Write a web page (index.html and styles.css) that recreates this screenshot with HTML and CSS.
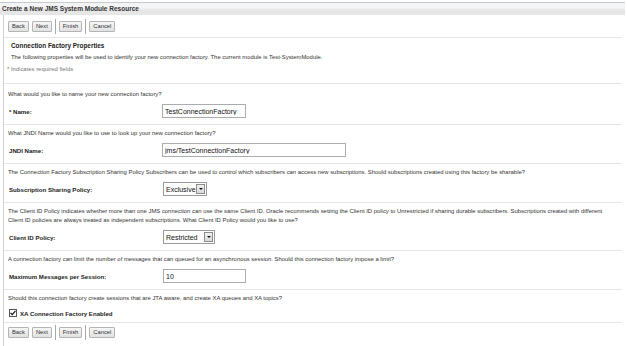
FILE: index.html
```html
<!DOCTYPE html>
<html lang="en">
<head>
  <meta charset="UTF-8">
  <meta name="viewport" content="width=device-width, initial-scale=1.0">
  <title>Create a New JMS System Module Resource</title>
  <link rel="stylesheet" href="styles.css">
</head>
<body>
  <div class="title-bar">Create a New JMS System Module Resource</div>

  <div class="panel">
    <div class="toolbar">
      <button type="button" class="btn">Back</button>
      <button type="button" class="btn">Next</button>
      <span class="sep"></span>
      <button type="button" class="btn">Finish</button>
      <span class="sep"></span>
      <button type="button" class="btn">Cancel</button>
    </div>

    <div class="section intro">
      <h2>Connection Factory Properties</h2>
      <p class="desc">The following properties will be used to identify your new connection factory. The current module is Test-SystemModule.</p>
      <p class="required">* Indicates required fields</p>
    </div>

    <div class="section section-name">
      <p class="question">What would you like to name your new connection factory?</p>
      <div class="row">
        <label class="label" for="name">* Name:</label>
        <input type="text" id="name" class="text-input" value="TestConnectionFactory">
      </div>
    </div>

    <div class="section">
      <p class="question">What JNDI Name would you like to use to look up your new connection factory?</p>
      <div class="row">
        <label class="label" for="jndi">JNDI Name:</label>
        <input type="text" id="jndi" class="text-input wide" value="jms/TestConnectionFactory">
      </div>
    </div>

    <div class="section">
      <p class="question">The Connection Factory Subscription Sharing Policy Subscribers can be used to control which subscribers can access new subscriptions. Should subscriptions created using this factory be sharable?</p>
      <div class="row">
        <span class="label">Subscription Sharing Policy:</span>
        <span class="select">
          <span class="select-value">Exclusive</span>
          <span class="select-arrow"></span>
        </span>
      </div>
    </div>

    <div class="section">
      <p class="question">The Client ID Policy indicates whether more than one JMS connection can use the same Client ID. Oracle recommends setting the Client ID policy to Unrestricted if sharing durable subscribers. Subscriptions created with different<br>Client ID policies are always treated as independent subscriptions. What Client ID Policy would you like to use?</p>
      <div class="row">
        <span class="label">Client ID Policy:</span>
        <span class="select">
          <span class="select-value select-value-wide">Restricted</span>
          <span class="select-arrow"></span>
        </span>
      </div>
    </div>

    <div class="section">
      <p class="question">A connection factory can limit the number of messages that can queued for an asynchronous session. Should this connection factory impose a limit?</p>
      <div class="row">
        <label class="label" for="max">Maximum Messages per Session:</label>
        <input type="text" id="max" class="text-input short" value="10">
      </div>
    </div>

    <div class="section section-xa">
      <p class="question">Should this connection factory create sessions that are JTA aware, and create XA queues and XA topics?</p>
      <div class="row row-check">
        <span class="checkbox">
          <svg width="6" height="6" viewBox="0 0 6 6"><path d="M0.5 2.8 L2.2 4.6 L5.5 0.8" fill="none" stroke="#111" stroke-width="1.2"/></svg>
        </span>
        <span class="check-label">XA Connection Factory Enabled</span>
      </div>
    </div>

    <div class="toolbar toolbar-bottom">
      <button type="button" class="btn">Back</button>
      <button type="button" class="btn">Next</button>
      <span class="sep"></span>
      <button type="button" class="btn">Finish</button>
      <span class="sep"></span>
      <button type="button" class="btn">Cancel</button>
    </div>
  </div>
</body>
</html>
```

FILE: styles.css
```css
* {
  box-sizing: border-box;
  margin: 0;
  padding: 0;
}

body {
  font-family: 'Liberation Sans', Arial, sans-serif;
  font-size: 5.9px;
  color: #333;
  background-color: #fff;
  padding-top: 2px;
}

/* タイトルバー */
.title-bar {
  width: 625px;
  height: 13px;
  border-top: 1px solid #c3cbd3;
  background: linear-gradient(#f4f4f4 0, #f4f4f4 40%, #e6e6e6 60%, #e6e6e6 100%);
  font-size: 6.5px;
  font-weight: bold;
  line-height: 12px;
  color: #333;
  padding-left: 2px;
}

.panel {
  width: 619px;
  margin-left: 3px;
  border-left: 1px solid #d0d0d0;
  min-height: 331px;
}

/* ボタン */
.toolbar {
  display: flex;
  align-items: center;
  gap: 3px;
  height: 22px;
  padding: 0 0 0 4px;
}

.toolbar-bottom {
  border-top: 1px solid #e5e5e5;
  height: auto;
  padding: 4px 0 0 4px;
}

.btn {
  height: 11px;
  padding: 0 3px;
  font-family: inherit;
  font-size: 5.8px;
  color: #333;
  background: linear-gradient(#f6f6f6, #e2e2e2);
  border: 1px solid #b4b4b4;
  border-radius: 1px;
  line-height: 9px;
}

.sep {
  width: 1px;
  height: 15px;
  margin: -2px 0;
  background-color: #a8a8a8;
}

/* セクション */
.section {
  border-top: 1px solid #e5e5e5;
  padding: 4px 0 6px 4px;
}

.intro {
  padding: 3px 0 9px 7px;
}

h2 {
  font-size: 6.4px;
  font-weight: bold;
  line-height: 9px;
  color: #222;
}

.desc {
  margin-top: 3px;
  line-height: 9px;
}

.required {
  margin-top: 3px;
  margin-left: -4px;
  line-height: 9px;
  color: #777;
}

.section-name {
  padding-top: 6px;
  padding-bottom: 6px;
}

.question {
  line-height: 9px;
}

.row {
  display: flex;
  align-items: center;
  height: 14px;
  margin-top: 5px;
}

.label {
  width: 154px;
  padding-left: 1px;
  font-size: 6.1px;
  font-weight: bold;
  color: #222;
}

.text-input {
  width: 84px;
  height: 14px;
  border: 1px solid #a9adb2;
  padding: 0 2px;
  font-family: inherit;
  font-size: 7px;
  color: #111;
}

.text-input.wide {
  width: 184px;
}

.text-input.short {
  width: 83px;
  margin-left: 1px;
}

/* セレクト */
.select {
  display: flex;
  align-items: center;
  height: 14px;
  margin-left: 1px;
  border: 1px solid #9a9a9a;
  padding: 0 1px 0 2px;
  font-size: 7px;
  color: #111;
}

.select-value {
  width: 30px;
}

.select-value-wide {
  width: 38px;
}

.select-arrow {
  position: relative;
  width: 9px;
  height: 10px;
  border: 1px solid #8c8c8c;
  background: linear-gradient(#f2f2f2, #d8d8d8);
}

.select-arrow::after {
  content: '';
  position: absolute;
  left: 2px;
  top: 3px;
  border-left: 2px solid transparent;
  border-right: 2px solid transparent;
  border-top: 2px solid #111;
}

/* チェックボックス */
.section-xa {
  padding-bottom: 4px;
}

.row-check {
  height: 10px;
  padding-left: 1px;
}

.checkbox {
  display: flex;
  align-items: center;
  justify-content: center;
  width: 8px;
  height: 8px;
  border: 1px solid #555;
  background-color: #fff;
  margin-right: 3px;
}

.check-label {
  font-size: 6.1px;
  font-weight: bold;
  color: #222;
}
```
